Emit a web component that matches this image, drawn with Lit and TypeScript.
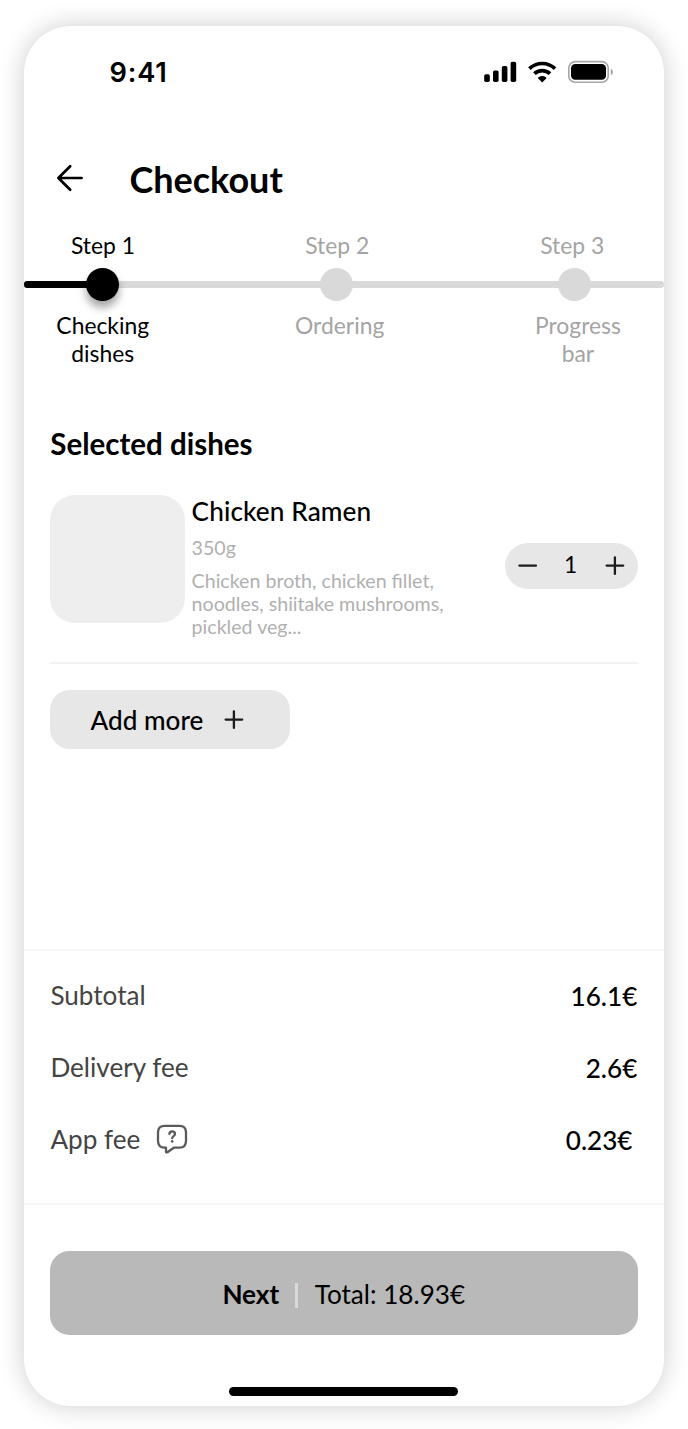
import { LitElement, html, css } from "lit";
import { customElement, property, state } from "lit/decorators.js";
import { classMap } from "lit/directives/class-map.js";

const plusIcon = html`<svg width="20" height="20" viewBox="0 0 20 20" fill="none" stroke="#1c1c1c" stroke-width="2.3" stroke-linecap="round">
  <path d="M1.6 9.6H18.2M9.9 1.3V17.9" />
</svg>`;

const minusIcon = html`<svg width="20" height="20" viewBox="0 0 20 20" fill="none" stroke="#1c1c1c" stroke-width="2.3" stroke-linecap="round">
  <path d="M1.4 9.6H18" />
</svg>`;

@customElement("status-bar")
class StatusBar extends LitElement {
  static styles = css`
    :host { display: flex; justify-content: space-between; padding: 29px 50px 0 85.5px; height: 34px; }
    .time { font: 600 27.2px/36px Inter, sans-serif; letter-spacing: 0.8px; color: #000; }
    .icons { display: block; margin-top: 4px; }
  `;

  render() {
    return html`
      <span class="time">9:41</span>
      <svg class="icons" width="130" height="26" viewBox="0 0 130 26">
        <rect x="0.2" y="15.2" width="5.6" height="7.8" rx="1.7" />
        <rect x="9" y="11.4" width="5.6" height="11.6" rx="1.7" />
        <rect x="17.8" y="7" width="5.6" height="16" rx="1.7" />
        <rect x="26.6" y="2.8" width="5.6" height="20.2" rx="1.7" />
        <g fill="none" stroke="#000" stroke-width="3.7">
          <path d="M45.4 9.6A18.6 18.6 0 0 1 71 9.6" />
          <path d="M50.4 14.7A11.4 11.4 0 0 1 66 14.7" />
        </g>
        <path d="M58.2 23.4L54.2 19.4Q53.9 18.8 54.5 18.3A6.4 6.4 0 0 1 61.9 18.3Q62.5 18.8 62.2 19.4Z" />
        <rect x="84.8" y="2.6" width="39.4" height="20.6" rx="6.3" fill="none" stroke="#a6a6a6" stroke-width="1.6" />
        <rect x="87" y="5" width="35" height="15.8" rx="4.3" />
        <path d="M126.8 9.8V16.2Q129 15.2 129 13T126.8 9.8Z" fill="#a6a6a6" />
      </svg>
    `;
  }
}

interface Step {
  title: string;
  caption: string;
}

@customElement("step-progress")
class StepProgress extends LitElement {
  @property({ attribute: false }) steps: Step[] = [];
  @property({ type: Number }) current = 0;

  static styles = css`
    :host {
      display: grid;
      grid-template-columns: 156px 313.4px 161.6px 9px;
      grid-template-rows: 28px 9px 33px 10px 56px;
      color: #a4a4a4;
      font: 400 22.86px/28px Lato, sans-serif;
      text-align: center;
    }
    .title { grid-row: 1; }
    .dot {
      grid-row: 3;
      justify-self: center;
      width: 33px;
      height: 33px;
      border-radius: 50%;
      background: #d9d9d9;
      z-index: 1;
    }
    .caption { grid-row: 5; justify-self: center; width: 100px; }
    .active { color: #000; }
    .dot.active { background: #000; box-shadow: 0 6.5px 9px rgba(0, 0, 0, 0.36); }
    .track, .done { grid-row: 3; align-self: center; height: 6.6px; border-radius: 3.3px; }
    .track { grid-column: 1 / -1; background: #d9d9d9; }
    .done { grid-column: 1; background: #000; width: 78px; }
    .col0 { grid-column: 1; }
    .col1 { grid-column: 2; }
    .col2 { grid-column: 3; }
    .title.col0 { padding-left: 2px; }
    .title.col1 { padding-left: 1px; }
    .title.col2 { padding-right: 4px; }
    .caption.col0 { padding-left: 1.5px; }
    .caption.col1 { padding-left: 6px; }
    .caption.col2 { padding-left: 7.5px; }
  `;

  render() {
    return html`
      <div class="track"></div>
      <div class="done"></div>
      ${this.steps.map((s, i) => {
        const c = { active: i === this.current, [`col${i}`]: true };
        return html`
          <div class=${classMap({ title: true, ...c })}>${s.title}</div>
          <div class=${classMap({ dot: true, ...c })}></div>
          <div class=${classMap({ caption: true, ...c })}>${s.caption}</div>
        `;
      })}
    `;
  }
}

@customElement("quantity-stepper")
class QuantityStepper extends LitElement {
  @property({ type: Number }) value = 1;

  static styles = css`
    :host {
      display: flex;
      align-items: center;
      justify-content: space-between;
      box-sizing: border-box;
      width: 133px;
      height: 46px;
      padding: 0 13px;
      border-radius: 23px;
      background: #e7e7e7;
    }
    button { display: flex; border: 0; padding: 0; background: none; }
    .value { font: 400 22.8px/28px Lato, sans-serif; color: #000; margin: -5px 0 0 -2px; }
  `;

  private change(by: number) {
    this.value = Math.max(0, this.value + by);
  }

  render() {
    return html`
      <button aria-label="Decrease" @click=${() => this.change(-1)}>${minusIcon}</button>
      <span class="value">${this.value}</span>
      <button aria-label="Increase" @click=${() => this.change(1)}>${plusIcon}</button>
    `;
  }
}

@customElement("app-root")
class AppRoot extends LitElement {
  @state() private steps: Step[] = [
    { title: "Step 1", caption: "Checking dishes" },
    { title: "Step 2", caption: "Ordering" },
    { title: "Step 3", caption: "Progress bar" },
  ];

  static styles = css`
    :host {
      display: block;
      box-sizing: border-box;
      height: 1429px;
      padding: 26px 24px 23px;
      background: #fff;
      overflow: hidden;
      font-family: Lato, sans-serif;
      color: #000;
    }
    .phone {
      display: flex;
      flex-direction: column;
      height: 1380px;
      border-radius: 47px;
      background: #fff;
      box-shadow: 0 0 26px rgba(0, 0, 0, 0.2);
    }
    .header { display: flex; align-items: center; height: 44px; margin: 69px 0 0 31px; }
    .back { display: flex; border: 0; padding: 0; background: none; margin-top: -4px; }
    .heading { margin: -2px 0 0 44.4px; font: 700 36px/44px Lato, sans-serif; }
    .steps { margin-top: 29px; }
    .content { display: flex; flex-direction: column; padding: 0 26px; height: 582px; }
    .subheading { margin: 59px 0 0 0.3px; font: 700 29.5px/36px Lato, sans-serif; }
    .dish {
      display: flex;
      height: 168px;
      margin-top: 32px;
      border-bottom: 2px solid #f2f2f2;
    }
    .photo { width: 134.5px; height: 128px; margin: 0.5px 0 0 0.3px; border-radius: 25px; background: #eee; flex: none; }
    .info { margin-left: 6.8px; width: 270px; flex: none; color: #b0b0b0; }
    .name { margin: 0; font: 500 26.2px/32px Lato, sans-serif; letter-spacing: 0.1px; color: #000; padding-top: 1px; }
    .weight, .text { font: 400 19.62px/23px Lato, sans-serif; }
    .weight { margin: 9px 0 10px; }
    .text { margin: 0; }
    .qty { margin: 49px 0 0 auto; }
    .add {
      display: flex;
      align-items: center;
      box-sizing: border-box;
      width: 240px;
      height: 59px;
      margin-top: 26px;
      padding: 0 0 0 40.5px;
      border: 0;
      border-radius: 20px;
      background: #e7e7e7;
      color: #000;
      font: 500 26.12px/32px Lato, sans-serif;
    }
    .add span { margin: 1px 20.5px 0 0; }
    .fees {
      box-sizing: border-box;
      height: 256px;
      border-top: 2px solid #f6f6f6;
      border-bottom: 2px solid #f6f6f6;
      padding: 28px 26px 0 26.4px;
    }
    .fee { display: flex; align-items: center; height: 32px; margin-bottom: 40px; font: 400 26.12px/32px Lato, sans-serif; color: #444; }
    .price { margin: 0 0.7px 0 auto; padding-top: 1px; font-weight: 500; color: #000; }
    .inset { margin-right: 5.5px; }
    .help { margin: 0 0 0 15.5px; display: block; }
    .footer { padding: 46px 26px 0; display: flex; flex-direction: column; align-items: center; }
    .next {
      display: flex;
      align-items: center;
      justify-content: center;
      width: 100%;
      height: 83.5px;
      border: 0;
      padding: 0 0.5px 0 0;
      border-radius: 19.5px;
      background: #b9b9b9;
      color: #000;
      font: 400 26.12px/32px Lato, sans-serif;
    }
    .next b { font-weight: 700; }
    .next span, .next b { margin-top: 2px; }
    .next .bar { width: 3px; height: 25px; margin: 5px 16.5px 0 16px; background: #d9d9d9; }
    .home { width: 228.5px; height: 8.5px; margin: 52.5px 1.5px 0 0; border-radius: 5px; background: #000; }
  `;

  render() {
    return html`
      <main class="phone">
        <status-bar></status-bar>
        <header class="header">
          <button class="back" aria-label="Back">
            <svg width="30" height="30" viewBox="0 0 30 30" fill="none" stroke="#000" stroke-width="2.7" stroke-linecap="round" stroke-linejoin="round">
              <path d="M15.2 3.2L3.4 15L15.2 26.8M3.4 15H26.6" />
            </svg>
          </button>
          <h1 class="heading">Checkout</h1>
        </header>
        <step-progress class="steps" .steps=${this.steps} .current=${0}></step-progress>
        <section class="content">
          <h2 class="subheading">Selected dishes</h2>
          <article class="dish">
            <div class="photo"></div>
            <div class="info">
              <h3 class="name">Chicken Ramen</h3>
              <p class="weight">350g</p>
              <p class="text">Chicken broth, chicken fillet, noodles, shiitake mushrooms, pickled veg...</p>
            </div>
            <quantity-stepper class="qty" .value=${1}></quantity-stepper>
          </article>
          <button class="add"><span>Add more</span>${plusIcon}</button>
        </section>
        <section class="fees">
          <div class="fee">Subtotal<span class="price">16.1€</span></div>
          <div class="fee">Delivery fee<span class="price">2.6€</span></div>
          <div class="fee">
            App fee
            <svg class="help" width="32" height="30" viewBox="0 0 32 30" fill="none" stroke="#5a5a5a" stroke-width="2.3" stroke-linecap="round" stroke-linejoin="round">
              <path d="M8.6 1.9H23.4Q30 1.9 30 8.5V17Q30 23.7 23.4 23.7H17.8L11.4 28.2Q10 29 10 27.4V23.7H8.6Q2 23.7 2 17V8.5Q2 1.9 8.6 1.9Z" />
              <path d="M13.4 10.1C13.4 6.5 19 6.6 19 10C19 12.2 16.2 12 16.2 14.2" />
              <path d="M16.2 17.4V17.5" stroke-width="2.6" />
            </svg>
            <span class="price inset">0.23€</span>
          </div>
        </section>
        <footer class="footer">
          <button class="next"><b>Next</b><span class="bar"></span><span>Total: 18.93€</span></button>
          <div class="home"></div>
        </footer>
      </main>
    `;
  }
}
